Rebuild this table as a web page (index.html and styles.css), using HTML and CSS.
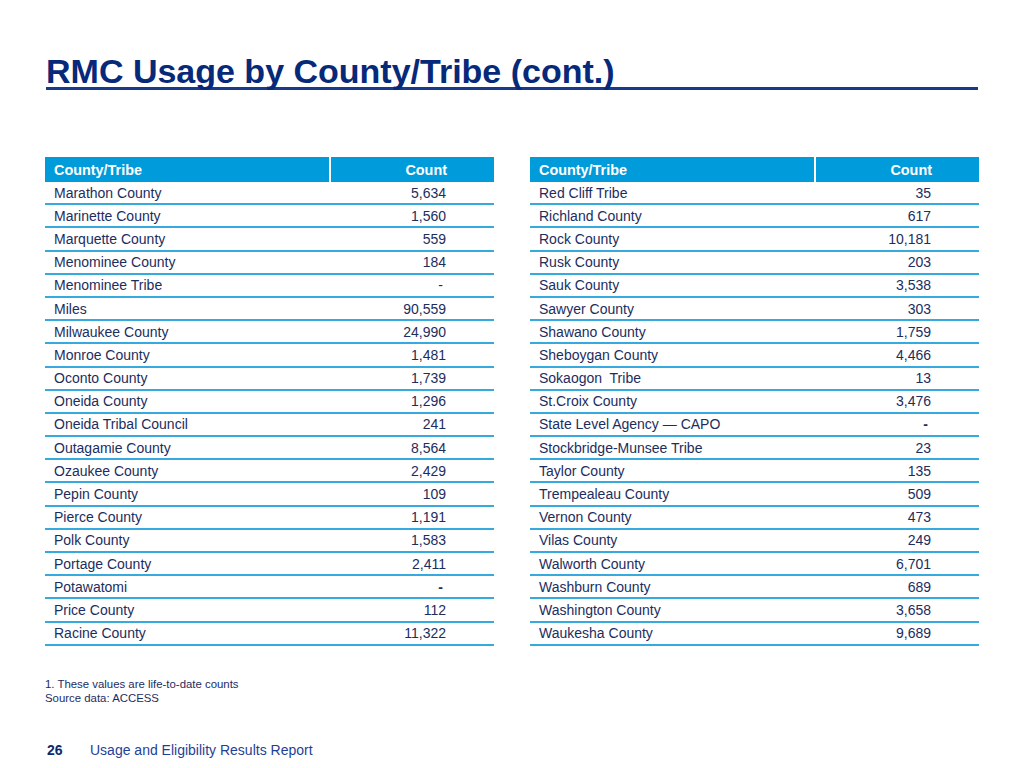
FILE: index.html
```html
<!DOCTYPE html>
<html lang="en">
<head>
<meta charset="utf-8">
<title>RMC Usage by County/Tribe (cont.)</title>
<link rel="stylesheet" href="styles.css">
</head>
<body>
<div class="page">
  <h1 class="title">RMC Usage by County/Tribe (cont.)</h1>
  <div class="tables">
    <table class="data">
      <colgroup><col class="c1"><col class="c2"></colgroup>
      <thead><tr><th class="name">County/Tribe</th><th class="num">Count</th></tr></thead>
      <tbody>
        <tr><td class="name">Marathon County</td><td class="num">5,634</td></tr>
        <tr><td class="name">Marinette County</td><td class="num">1,560</td></tr>
        <tr><td class="name">Marquette County</td><td class="num">559</td></tr>
        <tr><td class="name">Menominee County</td><td class="num">184</td></tr>
        <tr><td class="name">Menominee Tribe</td><td class="num dash">-</td></tr>
        <tr><td class="name">Miles</td><td class="num">90,559</td></tr>
        <tr><td class="name">Milwaukee County</td><td class="num">24,990</td></tr>
        <tr><td class="name">Monroe County</td><td class="num">1,481</td></tr>
        <tr><td class="name">Oconto County</td><td class="num">1,739</td></tr>
        <tr><td class="name">Oneida County</td><td class="num">1,296</td></tr>
        <tr><td class="name">Oneida Tribal Council</td><td class="num">241</td></tr>
        <tr><td class="name">Outagamie County</td><td class="num">8,564</td></tr>
        <tr><td class="name">Ozaukee County</td><td class="num">2,429</td></tr>
        <tr><td class="name">Pepin County</td><td class="num">109</td></tr>
        <tr><td class="name">Pierce County</td><td class="num">1,191</td></tr>
        <tr><td class="name">Polk County</td><td class="num">1,583</td></tr>
        <tr><td class="name">Portage County</td><td class="num">2,411</td></tr>
        <tr><td class="name">Potawatomi</td><td class="num dash bold">-</td></tr>
        <tr><td class="name">Price County</td><td class="num">112</td></tr>
        <tr><td class="name">Racine County</td><td class="num">11,322</td></tr>
      </tbody>
    </table>
    <table class="data">
      <colgroup><col class="c1"><col class="c2"></colgroup>
      <thead><tr><th class="name">County/Tribe</th><th class="num">Count</th></tr></thead>
      <tbody>
        <tr><td class="name">Red Cliff Tribe</td><td class="num">35</td></tr>
        <tr><td class="name">Richland County</td><td class="num">617</td></tr>
        <tr><td class="name">Rock County</td><td class="num">10,181</td></tr>
        <tr><td class="name">Rusk County</td><td class="num">203</td></tr>
        <tr><td class="name">Sauk County</td><td class="num">3,538</td></tr>
        <tr><td class="name">Sawyer County</td><td class="num">303</td></tr>
        <tr><td class="name">Shawano County</td><td class="num">1,759</td></tr>
        <tr><td class="name">Sheboygan County</td><td class="num">4,466</td></tr>
        <tr><td class="name">Sokaogon&nbsp; Tribe</td><td class="num">13</td></tr>
        <tr><td class="name">St.Croix County</td><td class="num">3,476</td></tr>
        <tr><td class="name">State Level Agency — CAPO</td><td class="num dash bold">-</td></tr>
        <tr><td class="name">Stockbridge-Munsee Tribe</td><td class="num">23</td></tr>
        <tr><td class="name">Taylor County</td><td class="num">135</td></tr>
        <tr><td class="name">Trempealeau County</td><td class="num">509</td></tr>
        <tr><td class="name">Vernon County</td><td class="num">473</td></tr>
        <tr><td class="name">Vilas County</td><td class="num">249</td></tr>
        <tr><td class="name">Walworth County</td><td class="num">6,701</td></tr>
        <tr><td class="name">Washburn County</td><td class="num">689</td></tr>
        <tr><td class="name">Washington County</td><td class="num">3,658</td></tr>
        <tr><td class="name">Waukesha County</td><td class="num">9,689</td></tr>
      </tbody>
    </table>
  </div>
  <div class="notes">
    <p>1. These values are life-to-date counts</p>
    <p>Source data: ACCESS</p>
  </div>
  <footer class="footer">
    <span class="pageno">26</span>
    <span class="report">Usage and Eligibility Results Report</span>
  </footer>
</div>
</body>
</html>
```

FILE: styles.css
```css
html, body {
  margin: 0;
  padding: 0;
  background: #ffffff;
}

.page {
  width: 1024px;
  height: 768px;
  box-sizing: border-box;
  padding: 55px 0 0 45px;
  font-family: "Liberation Sans", Arial, sans-serif;
  color: #1c2d5e;
}

.title {
  margin: 0 0 0 1px;
  width: 932px;
  font-size: 34px;
  line-height: 32px;
  font-weight: bold;
  color: #06297a;
  border-bottom: 3px solid #173a8c;
}

.tables {
  display: flex;
  gap: 36px;
  margin-top: 67px;
}

.data {
  border-collapse: collapse;
  table-layout: fixed;
  width: 449px;
  font-size: 14px;
}

.data .c1 { width: 285px; }
.data .c2 { width: auto; }

.data th {
  background: #009bdb;
  color: #ffffff;
  font-weight: bold;
  font-size: 14.4px;
  height: 25px;
  padding: 0;
  vertical-align: middle;
}

.data th.name {
  text-align: left;
  padding-left: 9px;
  border-right: 2px solid #ffffff;
}

.data th.num {
  text-align: right;
  padding-right: 47px;
}

.data td {
  height: 21.2px;
  padding: 0;
  border-bottom: 2px solid #36a9de;
  vertical-align: middle;
  color: #1c2d5e;
}

.data td.name {
  padding-left: 9px;
  text-align: left;
  white-space: nowrap;
}

.data td.num {
  text-align: right;
  padding-right: 48px;
}

.data td.dash {
  padding-right: 51px;
}

.data td.bold {
  font-weight: bold;
}

.notes {
  margin-top: 31px;
  font-size: 11.4px;
  line-height: 14px;
  color: #1c2d5e;
}

.notes p {
  margin: 0;
}

.footer {
  display: flex;
  align-items: baseline;
  margin-top: 37px;
  margin-left: 2px;
  font-size: 14px;
  line-height: 16px;
}

.pageno {
  font-weight: bold;
  color: #0a2a6e;
  width: 43px;
}

.report {
  color: #1f3f96;
}
```
